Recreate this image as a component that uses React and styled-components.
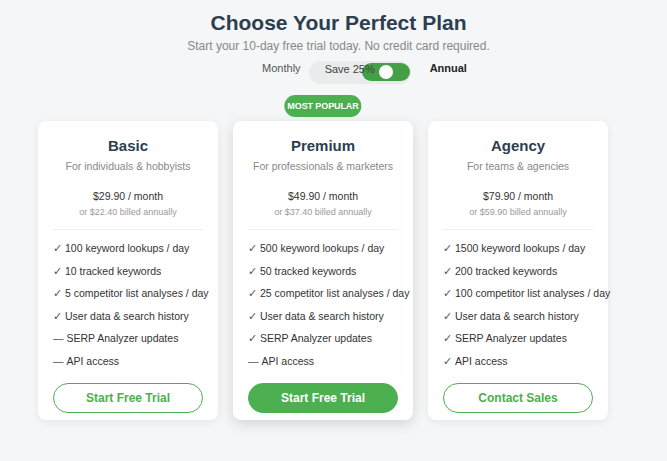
import React from "react";
import styled, { createGlobalStyle } from "styled-components";

const plans = [
  {
    name: "Basic",
    tagline: "For individuals & hobbyists",
    price: "$29.90 / month",
    annual: "or $22.40 billed annually",
    features: [
      [true, "100 keyword lookups / day"],
      [true, "10 tracked keywords"],
      [true, "5 competitor list analyses / day"],
      [true, "User data & search history"],
      [false, "SERP Analyzer updates"],
      [false, "API access"],
    ],
    cta: "Start Free Trial",
  },
  {
    name: "Premium",
    tagline: "For professionals & marketers",
    price: "$49.90 / month",
    annual: "or $37.40 billed annually",
    popular: true,
    features: [
      [true, "500 keyword lookups / day"],
      [true, "50 tracked keywords"],
      [true, "25 competitor list analyses / day"],
      [true, "User data & search history"],
      [true, "SERP Analyzer updates"],
      [false, "API access"],
    ],
    cta: "Start Free Trial",
  },
  {
    name: "Agency",
    tagline: "For teams & agencies",
    price: "$79.90 / month",
    annual: "or $59.90 billed annually",
    features: [
      [true, "1500 keyword lookups / day"],
      [true, "200 tracked keywords"],
      [true, "100 competitor list analyses / day"],
      [true, "User data & search history"],
      [true, "SERP Analyzer updates"],
      [true, "API access"],
    ],
    cta: "Contact Sales",
  },
];

function App() {
  return (
    <>
      <GlobalStyle />
      <Page>
        <Title>Choose Your Perfect Plan</Title>
        <Subtitle>Start your 10-day free trial today. No credit card required.</Subtitle>
        <ToggleRow>
          <ToggleLabel>Monthly</ToggleLabel>
          <SavePill>
            <Switch>
              <Knob />
            </Switch>
            <SaveText>Save 25%</SaveText>
          </SavePill>
          <ToggleLabel $active>Annual</ToggleLabel>
        </ToggleRow>
        <Cards>
          {plans.map((p) => (
            <Card key={p.name} $popular={p.popular}>
              {p.popular && <Badge>MOST POPULAR</Badge>}
              <PlanName>{p.name}</PlanName>
              <Tagline>{p.tagline}</Tagline>
              <Price>{p.price}</Price>
              <Annual>{p.annual}</Annual>
              <Divider />
              <Features>
                {p.features.map(([ok, text]) => (
                  <Feature key={text}>
                    <Mark>{ok ? "✓" : "—"}</Mark>
                    {text}
                  </Feature>
                ))}
              </Features>
              <CtaButton $filled={p.popular}>{p.cta}</CtaButton>
            </Card>
          ))}
        </Cards>
      </Page>
    </>
  );
}

export default App;

const GlobalStyle = createGlobalStyle`
  body {
    margin: 0;
    background: #f4f6f7;
    font-family: "Liberation Sans", Arial, sans-serif;
  }
`;

const Page = styled.div`
  width: 667px;
  height: 461px;
  display: flex;
  flex-direction: column;
  align-items: center;
  padding-top: 11px;
  box-sizing: border-box;
  overflow: hidden;
`;

const Title = styled.h1`
  margin: 0;
  font-size: 21px;
  line-height: 24px;
  font-weight: 700;
  color: #2c3e50;
  padding-left: 10px;
`;

const Subtitle = styled.p`
  margin: 3px 0 0;
  font-size: 12px;
  line-height: 16px;
  color: #888;
  padding-left: 10px;
`;

const ToggleRow = styled.div`
  display: flex;
  align-items: center;
  gap: 8px;
  margin-top: 7px;
  padding-left: 62px;
`;

const ToggleLabel = styled.span`
  font-size: 11px;
  color: ${(p) => (p.$active ? "#222" : "#555")};
  font-weight: ${(p) => (p.$active ? 700 : 400)};
  margin-left: ${(p) => (p.$active ? "11px" : 0)};
  padding-bottom: 9px;
`;

const SavePill = styled.div`
  position: relative;
  width: 102px;
  height: 23px;
  border-radius: 12px;
  background: #e9ebed;
  box-sizing: border-box;
  padding: 0 0 8px 16px;
  display: flex;
  align-items: center;
`;

const SaveText = styled.span`
  position: relative;
  font-size: 11px;
  color: #444;
  white-space: nowrap;
`;

const Switch = styled.div`
  position: absolute;
  right: 1px;
  top: 2px;
  width: 48px;
  height: 18px;
  border-radius: 9px;
  background: #43a047;
`;

const Knob = styled.div`
  position: absolute;
  left: 17px;
  top: 2px;
  width: 14px;
  height: 14px;
  border-radius: 50%;
  background: #fff;
`;

const Cards = styled.div`
  display: flex;
  gap: 15px;
  margin-top: 37px;
  align-self: flex-start;
  margin-left: 38px;
`;

const Card = styled.div`
  position: relative;
  width: 180px;
  height: 299px;
  box-sizing: border-box;
  padding: 15px 15px 7px;
  background: #fff;
  border-radius: 8px;
  box-shadow: ${(p) =>
    p.$popular
      ? "0 4px 14px rgba(0, 0, 0, 0.14)"
      : "0 2px 8px rgba(0, 0, 0, 0.07)"};
  display: flex;
  flex-direction: column;
  align-items: stretch;
  text-align: center;
`;

const Badge = styled.div`
  position: absolute;
  top: -26px;
  left: 50%;
  transform: translateX(-50%);
  background: #4caf50;
  color: #fff;
  font-size: 9px;
  font-weight: 700;
  height: 22px;
  line-height: 22px;
  padding: 0 3px;
  border-radius: 11px;
  white-space: nowrap;
  letter-spacing: -0.1px;
`;

const PlanName = styled.div`
  font-size: 15px;
  font-weight: 700;
  color: #2c3e50;
  line-height: 20px;
`;

const Tagline = styled.div`
  font-size: 10.5px;
  color: #888;
  margin-top: 3px;
  line-height: 14px;
`;

const Price = styled.div`
  font-size: 10.5px;
  color: #333;
  margin-top: 16px;
  line-height: 14px;
`;

const Annual = styled.div`
  font-size: 9px;
  color: #999;
  margin-top: 3px;
  line-height: 12px;
`;

const Divider = styled.div`
  height: 1px;
  background: #eee;
  margin-top: 11px;
`;

const Features = styled.ul`
  list-style: none;
  margin: 11px 0 0;
  padding: 0;
  text-align: left;
  display: flex;
  flex-direction: column;
  gap: 8.6px;
`;

const Feature = styled.li`
  font-size: 10.5px;
  line-height: 14px;
  color: #333;
  white-space: nowrap;
`;

const Mark = styled.span`
  color: #555;
  margin-right: 3px;
`;

const CtaButton = styled.button`
  margin-top: auto;
  height: 30px;
  border-radius: 15px;
  border: 1.5px solid #4caf50;
  background: ${(p) => (p.$filled ? "#4caf50" : "#fff")};
  color: ${(p) => (p.$filled ? "#fff" : "#4caf50")};
  font-family: inherit;
  font-size: 12px;
  font-weight: 700;
  cursor: pointer;
`;
